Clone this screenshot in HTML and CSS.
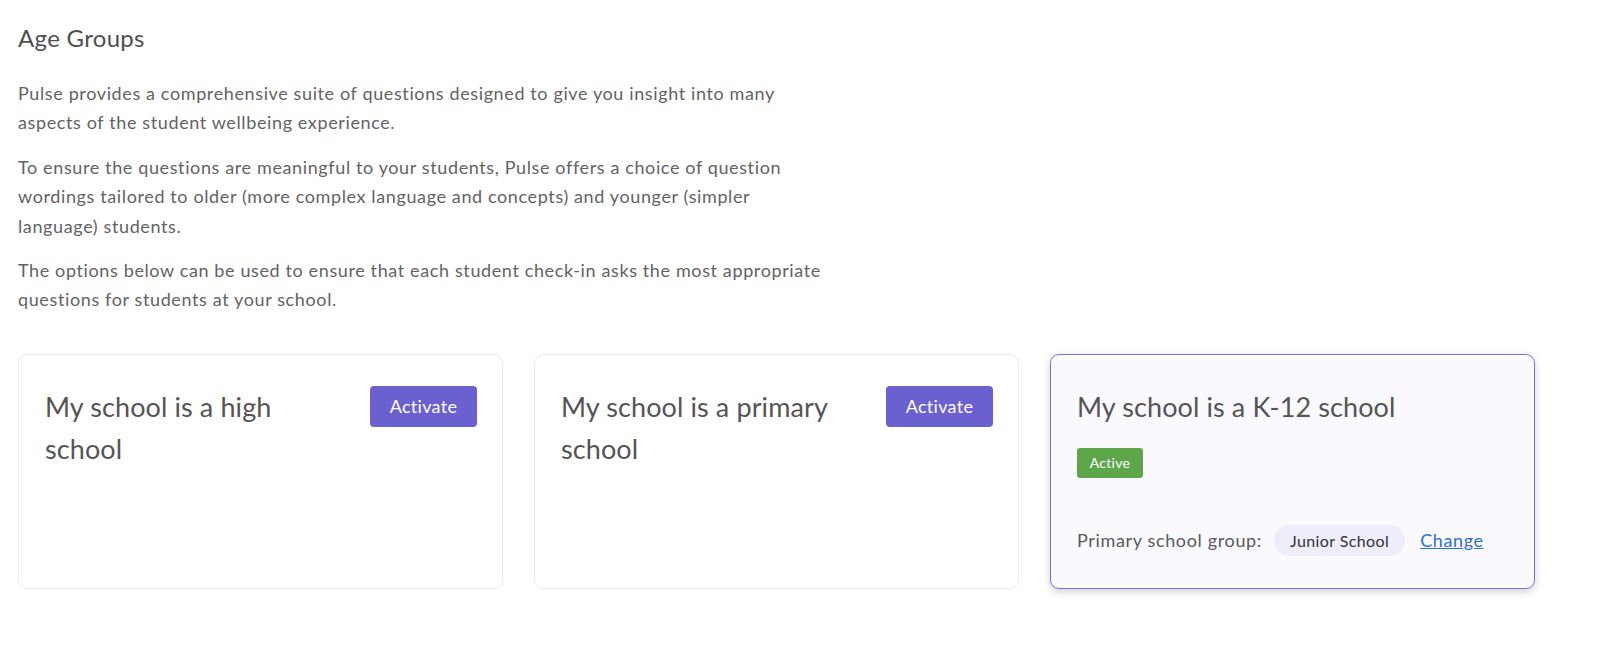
FILE: index.html
```html
<!DOCTYPE html>
<html lang="en">
<head>
<meta charset="utf-8">
<title>Age Groups</title>
<link rel="stylesheet" href="styles.css">
</head>
<body>
<main class="page">
  <h2 class="title">Age Groups</h2>
  <div class="intro">
    <p>Pulse provides a comprehensive suite of questions designed to give you insight into many aspects of the student wellbeing experience.</p>
    <p>To ensure the questions are meaningful to your students, Pulse offers a choice of question wordings tailored to older (more complex language and concepts) and younger (simpler language) students.</p>
    <p>The options below can be used to ensure that each student check-in asks the most appropriate questions for students at your school.</p>
  </div>
  <div class="cards">
    <section class="card">
      <div class="card-head">
        <h3 class="card-title">My school is a high school</h3>
        <button class="btn">Activate</button>
      </div>
    </section>
    <section class="card">
      <div class="card-head">
        <h3 class="card-title">My school is a primary school</h3>
        <button class="btn">Activate</button>
      </div>
    </section>
    <section class="card card-active">
      <div class="card-head">
        <h3 class="card-title">My school is a K-12 school</h3>
      </div>
      <span class="badge">Active</span>
      <div class="group-row">
        <span class="group-label">Primary school group:</span>
        <span class="pill">Junior School</span>
        <a href="#" class="link">Change</a>
      </div>
    </section>
  </div>
</main>
</body>
</html>
```

FILE: styles.css
```css
* { box-sizing: border-box; }
html, body { margin: 0; padding: 0; background: #ffffff; }
body {
  font-family: "Lato", "Noto Sans", sans-serif;
  color: #5f5f5f;
}
.page {
  padding: 23px 18px 40px 18px;
}
.title {
  margin: 0 0 26px;
  font-size: 24px;
  font-weight: 400;
  letter-spacing: 0.3px;
  color: #4f4f4f;
  line-height: 30px;
}
.intro {
  max-width: 812px;
}
.intro p {
  margin: 0 0 15px;
  font-size: 18px;
  letter-spacing: 0.62px;
  line-height: 29.4px;
  color: #636363;
}
.cards {
  margin-top: 39px;
  display: grid;
  grid-template-columns: repeat(3, 485px);
  gap: 31px;
}
.card {
  height: 235px;
  border: 1px solid #ebebf8;
  border-radius: 9px;
  background: #ffffff;
  padding: 31px 25px 32px 26px;
  display: flex;
  flex-direction: column;
}
.card-head {
  display: flex;
  justify-content: space-between;
  align-items: flex-start;
  gap: 20px;
}
.card-title {
  flex: 1;
  margin: 0;
  font-size: 27px;
  font-weight: 400;
  letter-spacing: 0.1px;
  line-height: 42px;
  color: #555555;
}
.btn {
  flex: none;
  width: 107px;
  height: 41px;
  border: none;
  border-radius: 4px;
  background: #6b60cf;
  color: #ffffff;
  font-family: inherit;
  font-size: 18px;
  letter-spacing: 0.3px;
  padding: 0;
  cursor: pointer;
}
.card-active {
  border-color: #7c72d4;
  background: #f9f9fe;
  box-shadow: 0 3px 8px rgba(0, 0, 0, 0.18);
}
.badge {
  align-self: flex-start;
  margin-top: 20px;
  width: 66px;
  height: 30px;
  line-height: 30px;
  text-align: center;
  border-radius: 3px;
  background: #5ea64a;
  color: #ffffff;
  font-size: 14px;
  letter-spacing: 0.3px;
}
.group-row {
  margin-top: auto;
  display: flex;
  align-items: center;
  font-size: 18px;
  color: #5a5a5a;
}
.group-label {
  letter-spacing: 0.65px;
}
.pill {
  margin-left: 12px;
  height: 31px;
  line-height: 31px;
  padding: 0 16px;
  border-radius: 16px;
  background: #eeeefb;
  color: #333333;
  font-size: 16px;
  letter-spacing: 0.4px;
}
.link {
  margin-left: 15px;
  color: #2f6fd8;
  letter-spacing: 0.6px;
  text-decoration: underline;
}
```
